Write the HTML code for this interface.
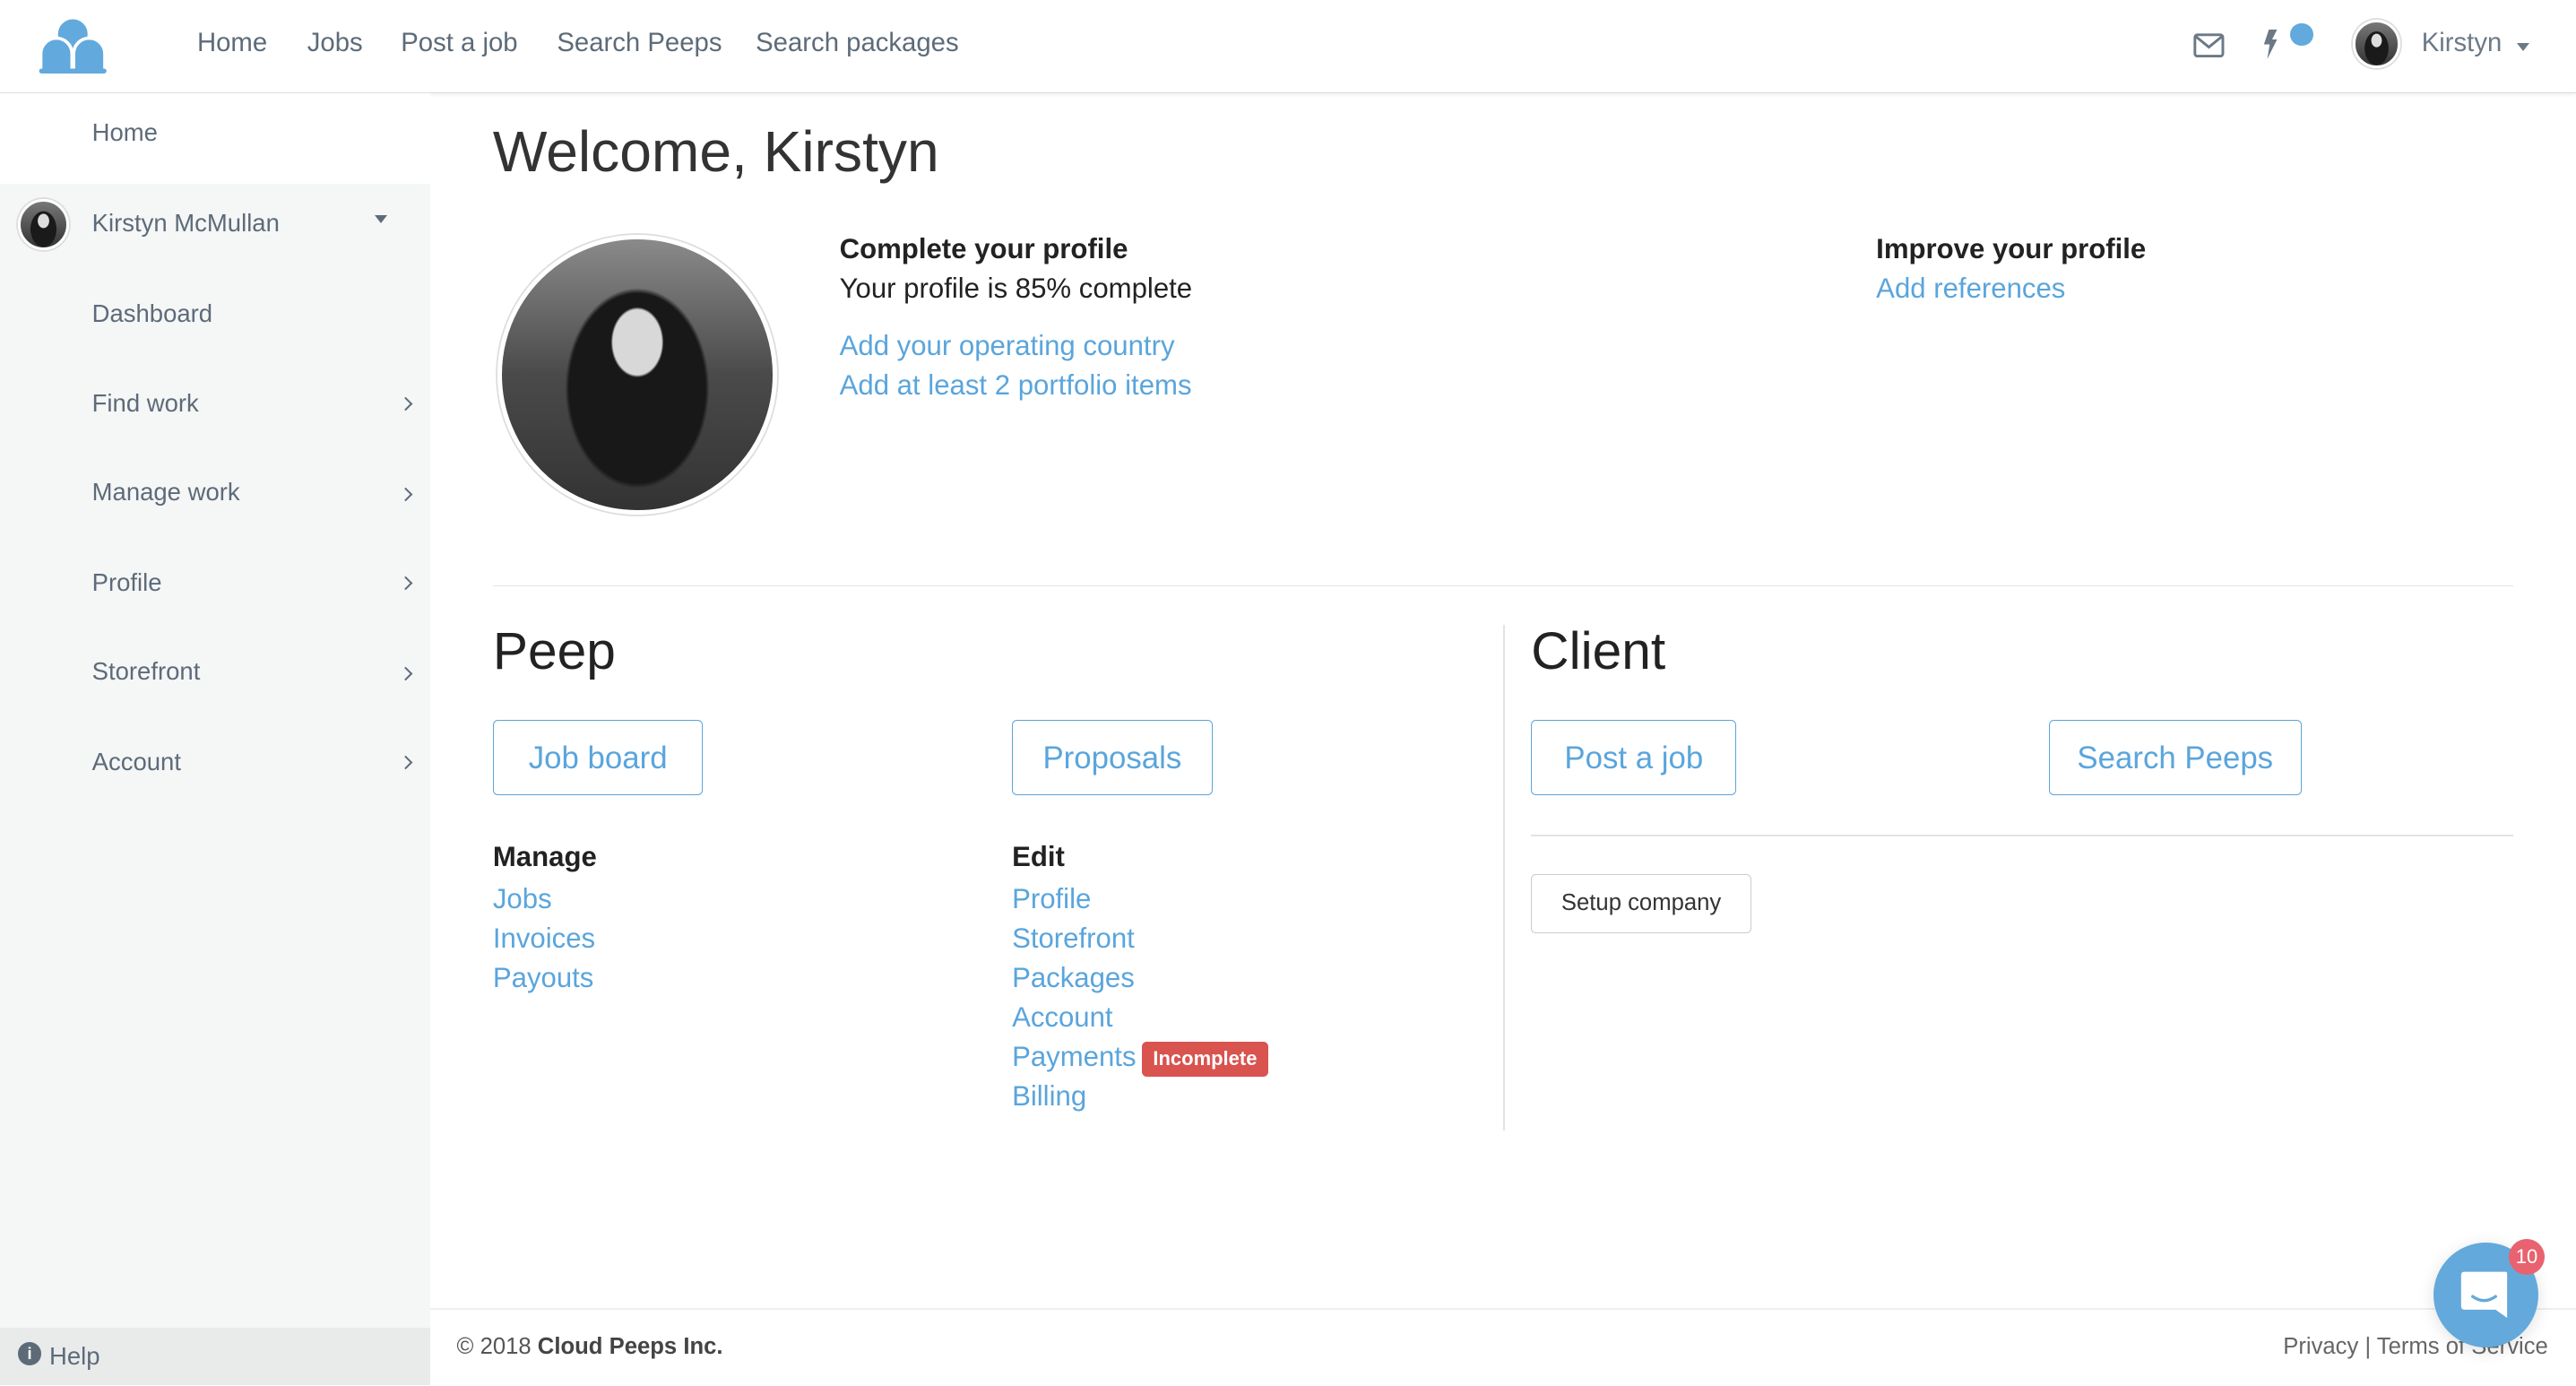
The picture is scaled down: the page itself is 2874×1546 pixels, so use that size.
<!DOCTYPE html>
<html><head><meta charset="utf-8"><style>
html,body{margin:0;padding:0;}
body{width:1568px;height:843px;zoom:1.83291;overflow:hidden;position:relative;font-family:"Liberation Sans",sans-serif;background:#fff;color:#333;}
.a{position:absolute;white-space:nowrap;}
.nav{font-size:16px;color:#5d6b79;top:17px;}
.side{position:absolute;left:0;top:57px;width:262px;height:786px;background:#f5f6f6;}
.si{position:absolute;left:56px;font-size:15px;color:#5d6b79;}
.chev{position:absolute;left:244px;width:5px;height:5px;border-right:1.3px solid #5d6b79;border-top:1.3px solid #5d6b79;transform:rotate(45deg);}
.link{color:#5aa5dc;font-size:17px;}
.btn{position:absolute;border:1px solid #5aa5dc;border-radius:3px;color:#5aa5dc;font-size:19px;text-align:center;line-height:46px;height:46px;box-sizing:border-box;}
.avatar{border-radius:50%;background:radial-gradient(ellipse 20% 25% at 50% 42%,#ddd 0 60%,transparent 65%),radial-gradient(ellipse 40% 55% at 50% 60%,#1a1a1a 0 70%,transparent 72%),linear-gradient(#777,#333);border:2px solid #fff;box-shadow:0 0 0 1px #ddd;}
</style></head><body>
<div class="a" style="left:0;top:0;width:1568px;height:56px;border-bottom:1px solid #ddd;box-shadow:0 1px 2px rgba(0,0,0,.06);"></div>
<svg class="a" style="left:22px;top:9px" width="45" height="36" viewBox="0 0 45 36">
<g fill="#62a9dd" stroke="#fff" stroke-width="2">
<circle cx="22.5" cy="12" r="10"/>
<path d="M3 34 V24 A9.5 9.5 0 0 1 22 24 V34Z"/>
<path d="M23 34 V24 A9.5 9.5 0 0 1 42 24 V34Z"/>
</g>
<path d="M13 25 A9 9 0 0 1 32 25" fill="none" stroke="#fff" stroke-width="0"/>
<rect x="2" y="33" width="41" height="3" rx="1.5" fill="#62a9dd"/>
</svg>
<div class="a nav" style="left:120px">Home</div>
<div class="a nav" style="left:187px">Jobs</div>
<div class="a nav" style="left:244px">Post a job</div>
<div class="a nav" style="left:339px">Search Peeps</div>
<div class="a nav" style="left:460px">Search packages</div>
<svg class="a" style="left:1335px;top:20px" width="19" height="15" viewBox="0 0 19 15"><rect x="1" y="1" width="17" height="13" rx="1.5" fill="none" stroke="#6b7987" stroke-width="1.6"/><path d="M1.5 2 L9.5 8.5 L17.5 2" fill="none" stroke="#6b7987" stroke-width="1.6"/></svg>
<svg class="a" style="left:1377px;top:18px" width="10" height="18" viewBox="0 0 10 18"><path d="M4 0 L9 0 L6 6 L9 6 L3 18 L4.5 9 L1 9Z" fill="#6b7987"/></svg>
<div class="a" style="left:1394px;top:14px;width:14px;height:14px;border-radius:50%;background:#62a9dd"></div>
<div class="a avatar" style="left:1432px;top:12px;width:26px;height:26px"></div>
<div class="a" style="left:1474px;top:17px;font-size:16px;color:#6b7987">Kirstyn</div>
<div class="a" style="left:1532px;top:26px;border-left:4px solid transparent;border-right:4px solid transparent;border-top:5px solid #6b7987"></div>
<div class="side"></div>
<div class="a" style="left:0;top:57px;width:262px;height:55px;background:#fff"></div>
<div class="si" style="top:72px">Home</div>
<div class="a avatar" style="left:11px;top:121px;width:28px;height:28px"></div>
<div class="si" style="top:127px">Kirstyn McMullan</div>
<div class="a" style="left:228px;top:131px;border-left:4px solid transparent;border-right:4px solid transparent;border-top:5px solid #5d6b79"></div>
<div class="si" style="top:182px">Dashboard</div>
<div class="si" style="top:237px">Find work</div><div class="chev" style="top:243px"></div>
<div class="si" style="top:291px">Manage work</div><div class="chev" style="top:298px"></div>
<div class="si" style="top:346px">Profile</div><div class="chev" style="top:352px"></div>
<div class="si" style="top:400px">Storefront</div><div class="chev" style="top:407px"></div>
<div class="si" style="top:455px">Account</div><div class="chev" style="top:461px"></div>
<div class="a" style="left:0;top:808px;width:262px;height:35px;background:#e9ebeb"></div>
<div class="a" style="left:11px;top:817px;width:14px;height:14px;border-radius:50%;background:#5d6b79;color:#fff;font-size:10px;font-weight:bold;text-align:center;line-height:14px">i</div>
<div class="a" style="left:30px;top:817px;font-size:15px;color:#5d6b79">Help</div>
<div class="a" style="left:300px;top:72px;font-size:35px;color:#333;font-weight:300">Welcome, Kirstyn</div>
<div class="a" style="left:303px;top:143px;width:170px;height:170px;border-radius:50%;background:radial-gradient(ellipse 15% 20% at 50% 38%,#d8d8d8 0 60%,transparent 65%),radial-gradient(ellipse 36% 50% at 50% 55%,#181818 0 70%,transparent 74%),linear-gradient(#8a8a8a,#4a4a4a 50%,#333);border:3px solid #fff;box-shadow:0 0 0 1px #ddd;box-sizing:border-box"></div>
<div class="a" style="left:511px;top:142px;font-size:17px;font-weight:bold;color:#222">Complete your profile</div>
<div class="a" style="left:511px;top:166px;font-size:17px;color:#222">Your profile is 85% complete</div>
<div class="a link" style="left:511px;top:201px">Add your operating country</div>
<div class="a link" style="left:511px;top:225px">Add at least 2 portfolio items</div>
<div class="a" style="left:1142px;top:142px;font-size:17px;font-weight:bold;color:#222">Improve your profile</div>
<div class="a link" style="left:1142px;top:166px">Add references</div>
<div class="a" style="left:300px;top:356px;width:1230px;height:1px;background:#e3e3e3"></div>
<div class="a" style="left:300px;top:378px;font-size:32px;color:#222">Peep</div>
<div class="a" style="left:932px;top:378px;font-size:32px;color:#222">Client</div>
<div class="a" style="left:915px;top:380px;width:1px;height:308px;background:#e3e3e3"></div>
<div class="btn" style="left:300px;top:438px;width:128px">Job board</div>
<div class="btn" style="left:616px;top:438px;width:122px">Proposals</div>
<div class="btn" style="left:932px;top:438px;width:125px">Post a job</div>
<div class="btn" style="left:1247px;top:438px;width:154px">Search Peeps</div>
<div class="a" style="left:932px;top:508px;width:598px;height:1px;background:#e3e3e3"></div>
<div class="a" style="left:932px;top:532px;width:134px;height:36px;border:1px solid #ccc;border-radius:3px;box-sizing:border-box;font-size:14px;color:#333;text-align:center;line-height:34px">Setup company</div>
<div class="a" style="left:300px;top:512px;font-size:17px;font-weight:bold;color:#222">Manage</div>
<div class="a link" style="left:300px;top:535px;line-height:24px">Jobs<br>Invoices<br>Payouts</div>
<div class="a" style="left:616px;top:512px;font-size:17px;font-weight:bold;color:#222">Edit</div>
<div class="a link" style="left:616px;top:535px;line-height:24px">Profile<br>Storefront<br>Packages<br>Account<br>Payments<br>Billing</div>
<div class="a" style="left:695px;top:634px;width:77px;height:21px;background:#d9534f;border-radius:3px;color:#fff;font-size:12px;font-weight:bold;text-align:center;line-height:21px">Incomplete</div>
<div class="a" style="left:262px;top:796px;width:1306px;height:1px;background:#eee"></div>
<div class="a" style="left:278px;top:812px;font-size:14px;color:#555">© 2018 <b style="color:#444">Cloud Peeps Inc.</b></div>
<div class="a" style="right:17px;top:812px;font-size:14px;color:#666">Privacy | Terms of Service</div>
<div class="a" style="left:1481px;top:756px;width:64px;height:64px;border-radius:50%;background:#64a9db;box-shadow:0 2px 10px rgba(0,0,0,.12)"></div>
<svg class="a" style="left:1497px;top:772px" width="32" height="32" viewBox="0 0 32 32"><path d="M3 2 H28 Q29 2 29 3 V30 L22 25 H3 Q1 25 1 23 V4 Q1 2 3 2Z" fill="#fff"/><path d="M8 17 Q15 22 22 17" fill="none" stroke="#64a9db" stroke-width="1.8" stroke-linecap="round"/></svg>
<div class="a" style="left:1527px;top:754px;width:22px;height:22px;border-radius:50%;background:#e8636f;color:#fff;font-size:12px;text-align:center;line-height:22px">10</div>
</body></html>
